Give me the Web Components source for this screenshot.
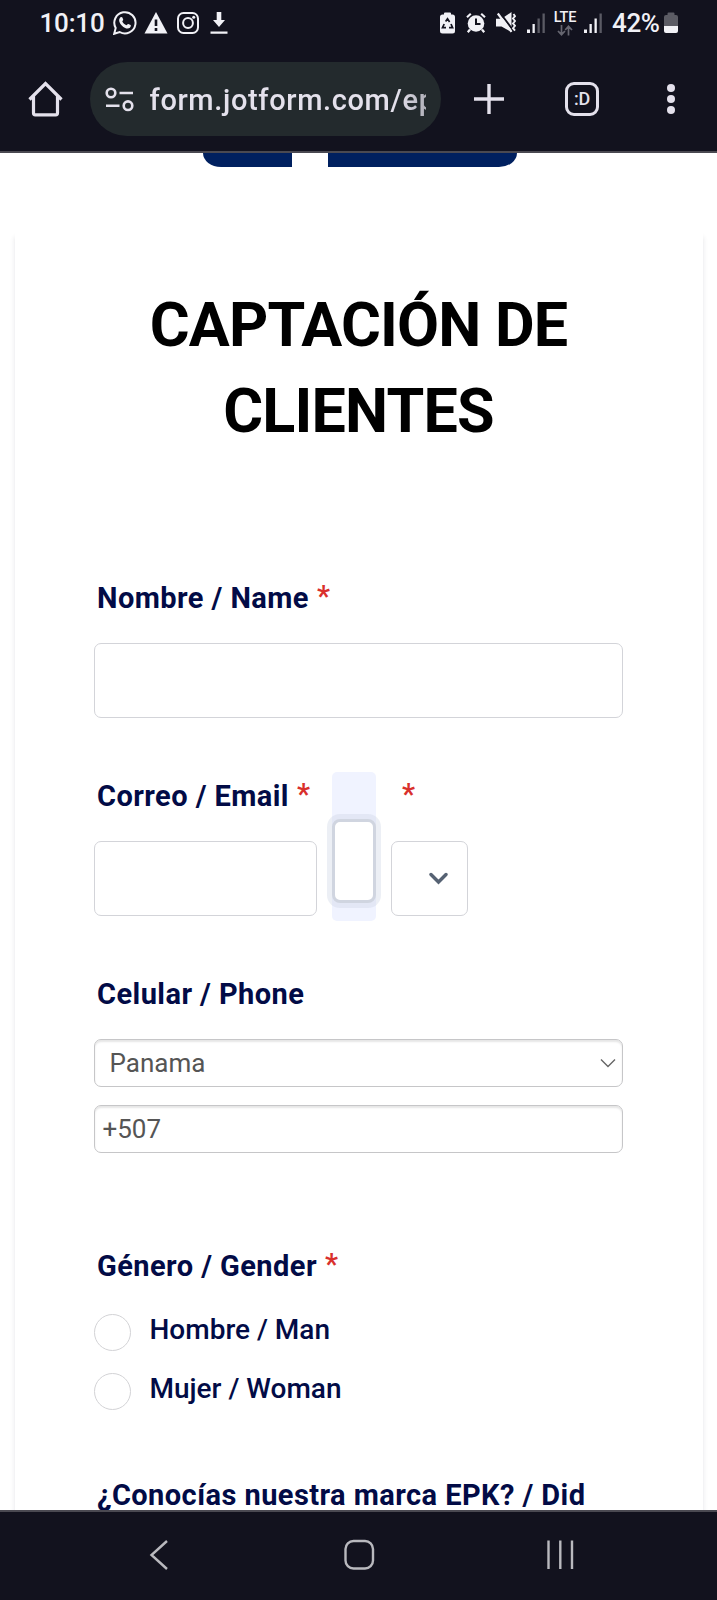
<!DOCTYPE html>
<html lang="es">
<head>
<meta charset="utf-8">
<title>Captación de clientes</title>
<style>
html,body{margin:0;height:1600px;overflow:hidden;background:#fff}
body{font-family:Roboto,"Liberation Sans",sans-serif}
</style>
</head>
<body>
<phone-screen>
  <status-bar slot="top"></status-bar>
  <browser-bar slot="top">form.jotform.com/epk</browser-bar>
  <form-card>
    <span slot="title">CAPTACIÓN DE CLIENTES</span>
    <form-field required label="Nombre / Name"><text-box></text-box></form-field>
    <field-row>
      <form-field required label="Correo / Email" style="width:223px"><text-box></text-box></form-field>
      <active-field></active-field>
      <form-field required label="" style="width:77px"><drop-box></drop-box></form-field>
    </field-row>
    <form-field label="Celular / Phone">
      <phone-box chevron style="--pad:14.500px">Panama</phone-box>
      <phone-box style="--pad:7.500px;margin-top:18px">+507</phone-box>
    </form-field>
    <form-field required label="Género / Gender" style="margin-top:93px;--gap:24px">
      <radio-option>Hombre / Man</radio-option>
      <radio-option>Mujer / Woman</radio-option>
    </form-field>
    <form-field label="¿Conocías nuestra marca EPK? / Did" style="margin-top:48px"></form-field>
  </form-card>
  <nav-bar slot="bottom"></nav-bar>
</phone-screen>
<script>
const define = (name, html) => customElements.define(name, class extends HTMLElement {
  constructor() {
    super();
    const t = document.createElement('template');
    t.innerHTML = html;
    this.attachShadow({mode: 'open'}).append(t.content.cloneNode(true));
  }
});

define('phone-screen', `
<style>
:host{display:flex;flex-direction:column;width:717px;height:1600px;overflow:hidden}
header{box-sizing:border-box;height:153px;background:#12121e;border-bottom:2px solid #4a4951;flex:none}
main{flex:1;min-height:0;overflow:hidden;background:#fff}
footer{flex:none}
.logo{display:flex;gap:36px;width:314px;height:14px;margin:0 0 0 203px}
.logo i{background:#00205f;height:14px}
.a{width:89px;border-radius:0 0 0 18px/0 0 0 14px}
.b{width:188.500px;border-radius:0 0 18px 0/0 0 14px 0}
</style>
<header><slot name="top"></slot></header>
<main><div class="logo"><i class="a"></i><i class="b"></i></div><slot></slot></main>
<footer><slot name="bottom"></slot></footer>`);

define('status-bar', `
<style>
:host{display:flex;height:48px;box-sizing:border-box;padding:0 39px 2px 39.500px;align-items:center;color:#f1f1f6}
svg{display:block;flex:none}
.time{font:500 26px/48px Roboto,sans-serif;width:73.500px;letter-spacing:-.2px}
.pct{font:500 26px/48px Roboto,sans-serif;width:52px;margin-left:10px;letter-spacing:-.4px}
.sp{flex:1}
.lte{width:24px;margin:0 7px 0 8px;height:25px;display:flex;flex-direction:column;align-items:center}
.lte span{font:500 14.500px/14px Roboto,sans-serif;margin-top:0;letter-spacing:-.2px}
</style>
<span class="time">10:10</span>
<svg width="24" height="24" viewBox="0 0 24 24"><path d="M1.2 22.8 2.7 17a10.6 10.6 0 1 1 4 4z" fill="none" stroke="#f1f1f6" stroke-width="2"/><path d="M7.5 6.2c.7-.4 1.6-.3 1.9.4l.8 2c.2.6-.8 1.5-.9 1.9.9 1.7 2.3 3 4.1 3.7.5 0 1.4-1.5 2-1.2l2.2 1.1c.6.5.1 2-.7 2.7-2.2 1.8-5.5.2-7.9-2.1C6.500 12.300 4.900 8.400 7.500 6.200z" fill="#f1f1f6"/></svg>
<svg width="24" height="22" viewBox="0 0 24 22" style="margin-left:7px"><path d="M12 0 23.500 21.500H.5z" fill="#f1f1f6"/><path d="M12 7.500v6.500M12 16v3" stroke="#12121e" stroke-width="2.600"/></svg>
<svg width="22" height="22" viewBox="0 0 22 22" style="margin-left:9px"><rect x="1" y="1" width="20" height="20" rx="5.500" fill="none" stroke="#f1f1f6" stroke-width="2"/><circle cx="11" cy="11" r="4.900" fill="none" stroke="#f1f1f6" stroke-width="2"/><circle cx="16.700" cy="5.300" r="1.500" fill="#f1f1f6"/></svg>
<svg width="18" height="24" viewBox="0 0 18 24" style="margin-left:11px"><path d="M6.700 1h4.600v8H15l-6 7-6-7h3.700zM.5 20.500h17v2.200H.5z" fill="#f1f1f6"/></svg>
<span class="sp"></span>
<svg width="15" height="22" viewBox="0 0 15 22"><path d="M4 2.500V1.500Q4 .5 5 .5h5q1 0 1 1v1h1.500Q15 2.500 15 5v14q0 2.500-2.500 2.500h-10Q0 21.500 0 19V5q0-2.500 2.500-2.500z" fill="#f1f1f6"/><path d="M5.600 9.500 7.500 6.800 9.600 10M11 12l1.600 3.600H9M6 15.600H2.500L4.200 12" fill="none" stroke="#12121e" stroke-width="1.700"/></svg>
<svg width="20" height="22" viewBox="0 0 20 22" style="margin-left:11px"><circle cx="10" cy="11.500" r="8.300" fill="#f1f1f6"/><path d="M1 5.200 4.800 1.800M19 5.200 15.200 1.800M4 17.500 1.800 20.300M16 17.500l2.200 2.800" stroke="#f1f1f6" stroke-width="2.200"/><path d="M10 6.500V12h4.500" fill="none" stroke="#12121e" stroke-width="2"/></svg>
<svg width="20" height="22" viewBox="0 0 20 22" style="margin-left:10px"><path d="M0 6.800h5.500L15.500 0v20L5.500 14.600H0z" fill="#f1f1f6"/><path d="M3.500.2 18 19.500" stroke="#12121e" stroke-width="2"/><path d="M1.800 1.500 15.500 19.800" stroke="#f1f1f6" stroke-width="2.200"/><path d="m17.500 2 1.500 2.200-2 2.300L19 9l-2 2.400 2 2.400-2 2.400 2 2.500" fill="none" stroke="#f1f1f6" stroke-width="1.900"/></svg>
<svg width="18" height="22" viewBox="0 0 18 22" style="margin-left:11px"><path d="M0 17.500h3V21H0zM5.500 12h2.300v9H5.500z" fill="#f1f1f6"/><path d="M10.500 6.500h2.300V21h-2.300zM15.500 1.500h2.300V21h-2.300z" fill="#5b5b64"/></svg>
<div class="lte"><span>LTE</span><svg width="16" height="11" viewBox="0 0 16 11"><path d="M4.500 0v9M1 6l3.500 3.700L8 6M11.500 10.500v-9M8.200 5l3.300-3.700L15 5" fill="none" stroke="#666670" stroke-width="1.700"/></svg></div>
<svg width="18" height="22" viewBox="0 0 18 22"><path d="M0 17.500h3V21H0zM5.500 12h2.300v9H5.500zM10.500 6.500h2.300V21h-2.300z" fill="#f1f1f6"/><path d="M15.500 1.500h2.300V21h-2.300z" fill="#5b5b64"/></svg>
<span class="pct">42%</span>
<svg width="14" height="22" viewBox="0 0 14 22"><path d="M3.500 3V1.500Q3.500.5 4.500.5h5q1 0 1 1V3H12q2 0 2 2v9H0V5q0-2 2-2z" fill="#5b5b64"/><path d="M0 14h14v5q0 2-2 2H2q-2 0-2-2z" fill="#f1f1f6"/></svg>`);

define('browser-bar', `
<style>
:host{display:flex;align-items:center;height:74px;margin-top:14px;color:#e4e1ec}
svg{display:block;flex:none}
.url{box-sizing:border-box;width:351px;height:74px;margin-left:27px;border-radius:37px;background:#232a2d;display:flex;align-items:center;padding:0 15px}
.txt{flex:1;margin:2px 0 0 15.500px;overflow:hidden;white-space:nowrap;font:500 29px/40px Roboto,sans-serif;letter-spacing:.64px;-webkit-mask:linear-gradient(90deg,#000 90%,#000b)}
.tab{box-sizing:border-box;width:34px;height:34px;border:3px solid #e4e1ec;border-radius:9px;margin-left:61px;font:500 18px/27px Roboto,sans-serif;text-align:center;letter-spacing:-.3px}
</style>
<svg width="35" height="36" viewBox="0 0 35 36" style="margin-left:28px"><path d="M1.500 18.500 17.500 2.500l16 16M5.500 15.500V32q0 1.800 1.800 1.800h20.400q1.800 0 1.800-1.800V15.500" fill="none" stroke="#e4e1ec" stroke-width="3.200"/></svg>
<div class="url"><svg width="29" height="25" viewBox="0 0 29 25"><g fill="none" stroke="#e4e1ec" stroke-width="2.600"><circle cx="6" cy="6" r="4.300"/><circle cx="23" cy="18.700" r="4.300"/><path d="M14.500 6H28M1 18.700h13.500"/></g></svg><div class="txt"><slot></slot></div></div>
<svg width="30" height="30" viewBox="0 0 30 30" style="margin-left:33px"><path d="M15 0v30M0 15h30" stroke="#e4e1ec" stroke-width="3.400"/></svg>
<div class="tab">:D</div>
<svg width="8" height="32" viewBox="0 0 8 32" style="margin-left:68px"><g fill="#e4e1ec"><circle cx="4" cy="5" r="4"/><circle cx="4" cy="16" r="4"/><circle cx="4" cy="27" r="4"/></g></svg>`);

define('form-card', `
<style>
:host{display:block;box-sizing:border-box;width:688px;height:1400px;margin:65px 0 0 15px;padding:50px 80px 0 79px;background:#fff;box-shadow:0 5px 5px rgba(30,30,60,.12)}
h1{margin:0 auto 124px;width:500px;font:700 61px/86px Roboto,sans-serif;letter-spacing:-.8px;color:#000;text-align:center}
</style>
<h1><slot name="title"></slot></h1><slot></slot>`);

customElements.define('form-field', class extends HTMLElement {
  connectedCallback() {
    if (this.shadowRoot) return;
    const star = this.hasAttribute('required') ? '<b>*</b>' : '';
    const text = this.getAttribute('label');
    this.attachShadow({mode: 'open'}).innerHTML = `
<style>
:host{display:block}
:host(:not(:first-of-type)){margin-top:58px}
.label{display:flex;height:40px;font:700 29px/40px Roboto,sans-serif;color:#020b46;padding-left:3px;margin-bottom:var(--gap,25px);white-space:nowrap;letter-spacing:.44px}
b{font-weight:600;color:#d9302c;margin:-2px 0 0 8px}
</style>
<div class="label"><span>${text}</span>${star}</div><slot></slot>`;
  }
});

define('field-row', `
<style>
:host{display:flex;gap:15px;margin-top:58px}
::slotted(*){margin-top:0!important;flex:none}
::slotted(active-field){margin-top:-4px!important;margin-bottom:-5px}
</style><slot></slot>`);

define('text-box', `
<style>:host{display:block;box-sizing:border-box;height:75px;border:1.500px solid #d3d4d9;border-radius:7px;background:#fff}</style>`);

define('active-field', `
<style>
:host{display:block;box-sizing:border-box;width:44px;height:149px;padding-top:47px;background:#f0f3ff;border-radius:5px}
div{box-sizing:border-box;width:44px;height:84px;border:3px solid #d0d5e0;border-radius:8px;background:#fff;box-shadow:0 0 0 5px rgba(205,213,230,.38)}
</style><div></div>`);

define('drop-box', `
<style>:host{display:flex;box-sizing:border-box;height:75px;border:1px solid #d3d4d9;border-radius:7px;align-items:center;padding-left:37px}</style>
<svg width="19" height="13" viewBox="0 0 19 13"><path d="m2 2.500 7.500 7.500L17 2.500" fill="none" stroke="#566273" stroke-width="3.400" stroke-linecap="round"/></svg>`);

define('phone-box', `
<style>
:host{display:flex;box-sizing:border-box;height:48px;border:1.500px solid #c6c6c8;border-radius:7px;align-items:center;justify-content:space-between;padding:0 6px 0 var(--pad);font:400 26px/46px Roboto,sans-serif;color:#555;box-shadow:inset 0 2px 2px rgba(0,0,0,.1)}
svg{display:none}
:host([chevron]) svg{display:block}
</style>
<span><slot></slot></span><svg width="16" height="11" viewBox="0 0 16 11"><path d="m1 1.500 7 7 7-7" fill="none" stroke="#666" stroke-width="1.400"/></svg>`);

define('radio-option', `
<style>
:host{display:flex;height:58.500px;font:500 28px/40px Roboto,sans-serif;color:#020b46}
i{box-sizing:border-box;width:37px;height:37px;border:1.300px solid #d3d3d6;border-radius:50%;margin:4px 18.500px 0 0}
</style><i></i><span><slot></slot></span>`);

define('nav-bar', `
<style>
:host{display:flex;box-sizing:border-box;height:90px;border-top:2px solid #4a4951;background:#12121e}
svg{display:block}
</style>
<svg width="717" height="88" viewBox="0 0 717 88"><g fill="none" stroke="#b9b9be" stroke-width="2.400"><path d="M167 29 151.500 43 167 57"/><rect x="345.500" y="29" width="27.500" height="27.500" rx="8"/><path d="M548.500 28.500v28.500M560.300 28.500v28.500M572 28.500v28.500"/></g></svg>`);
</script>
</body>
</html>
